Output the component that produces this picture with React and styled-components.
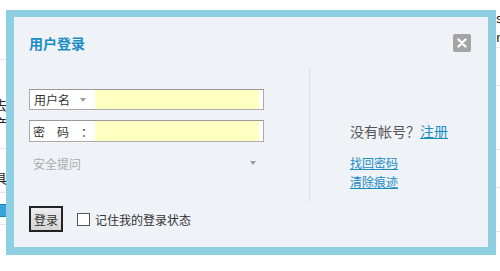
import styled, { createGlobalStyle } from "styled-components";

const GlobalStyle = createGlobalStyle`
  html, body {
    margin: 0;
    padding: 0;
    background: #fff;
  }
  body {
    font-family: "Noto Sans CJK SC", "Liberation Sans", sans-serif;
    font-size: 12px;
    color: #333;
  }
`;

const Page = styled.div`
  width: 500px;
  height: 271px;
  display: flex;
  overflow: hidden;
  background: #fff;
`;

const SideStrip = styled.div`
  width: ${(p) => p.width}px;
  flex-shrink: 0;
  overflow: hidden;
  display: flex;
  flex-direction: column;
  padding-top: ${(p) => p.top || 0}px;
`;

const StripText = styled.div`
  height: ${(p) => p.h}px;
  line-height: ${(p) => p.h}px;
  font-size: 13px;
  color: #222;
  white-space: nowrap;
  margin-left: ${(p) => p.shift || 0}px;
  border-bottom: ${(p) => (p.line ? "1px solid #e6e6e6" : "none")};
  box-sizing: border-box;
`;

const StripIcon = styled.div`
  width: 12px;
  height: 11px;
  margin: 11px 0 0 -7px;
  border-radius: 2px;
  background: #3aa3dc;
  border: 1px solid #1d7fb8;
`;

const Dialog = styled.div`
  margin-top: 10px;
  width: 490px;
  height: 245px;
  flex-shrink: 0;
  box-sizing: border-box;
  border-style: solid;
  border-color: #8ecfe1;
  border-width: 7px 8px 8px 8px;
  background: #eff2f7;
  padding: 17px 16px 0 15px;
  display: flex;
  flex-direction: column;
`;

const Header = styled.div`
  height: 18px;
  display: flex;
  align-items: center;
  justify-content: space-between;
`;

const Title = styled.h3`
  margin: 0;
  font-size: 14px;
  font-weight: bold;
  color: #1a8cc6;
`;

const CloseButton = styled.button`
  all: unset;
  width: 18px;
  height: 18px;
  border-radius: 2px;
  background: #a4a4a4;
  display: grid;
  place-items: center;
  margin-right: 1px;
`;

const Body = styled.div`
  margin-top: 16px;
  height: 134px;
  display: grid;
  grid-template-columns: 280px 1px 1fr;
`;

const LeftCol = styled.div`
  padding-top: 21px;
  display: flex;
  flex-direction: column;
`;

const FieldBox = styled.div`
  width: 235px;
  height: ${(p) => p.h}px;
  margin-top: ${(p) => p.gap || 0}px;
  box-sizing: border-box;
  border: 1px solid #aaa;
  border-top-color: #999;
  background: #fff;
  display: flex;
`;

const FieldLabel = styled.div`
  width: 65px;
  flex-shrink: 0;
  padding-left: ${(p) => p.pl || 4}px;
  box-sizing: border-box;
  display: flex;
  align-items: center;
  white-space: nowrap;
  overflow: hidden;
  color: #333;
  letter-spacing: ${(p) => p.spacing || 0}px;
`;

const Caret = styled.span`
  width: 0;
  height: 0;
  border-left: 3.5px solid transparent;
  border-right: 3.5px solid transparent;
  border-top: 4px solid #9a9a9a;
  margin-left: ${(p) => p.ml || 0}px;
`;

const YellowInput = styled.input`
  all: unset;
  flex: 1;
  margin-right: 4px;
  background: #ffffc2;
`;

const SelectRow = styled.div`
  width: 235px;
  height: 20px;
  margin-top: 11px;
  padding: 0 8px 0 4px;
  box-sizing: border-box;
  display: flex;
  align-items: center;
  justify-content: space-between;
  color: #aaa;
`;

const Divider = styled.div`
  background: #dcdfe4;
`;

const RightCol = styled.div`
  padding: 54px 0 0 40px;
  display: flex;
  flex-direction: column;
`;

const Question = styled.div`
  font-size: 14px;
  line-height: 18px;
  color: #555;
  margin-bottom: 12px;
`;

const Link = styled.a`
  color: #1a8cc6;
  text-decoration: underline;
  font-size: ${(p) => p.size || 12}px;
  line-height: 19px;
  cursor: pointer;
`;

const Footer = styled.div`
  margin-top: 4px;
  display: flex;
  align-items: center;
`;

const LoginButton = styled.button`
  all: unset;
  width: 34px;
  height: 26px;
  box-sizing: border-box;
  border: 2px solid #222;
  background: linear-gradient(#ededed, #d4d4d4);
  color: #333;
  font-size: 12px;
  display: grid;
  place-items: center;
`;

const CheckBox = styled.span`
  width: 13px;
  height: 13px;
  box-sizing: border-box;
  border: 1px solid #555;
  background: #fff;
  margin-left: 14px;
`;

const CheckLabel = styled.span`
  margin-left: 5px;
  color: #333;
`;

export default function App() {
  return (
    <>
      <GlobalStyle />
      <Page>
        <SideStrip width={6}>
          <StripText h={60} line />
          <StripText h={36} />
          <StripText h={18} shift={-6}>去</StripText>
          <StripText h={18} shift={-6}>产</StripText>
          <StripText h={17} line />
          <StripText h={20} />
          <StripText h={18} shift={-6}>具</StripText>
          <StripText h={6} line />
          <StripIcon />
          <StripText h={8} line />
        </SideStrip>
        <Dialog>
          <Header>
            <Title>用户登录</Title>
            <CloseButton aria-label="关闭">
              <svg width="10" height="10" viewBox="0 0 10 10">
                <path
                  d="M1.5 1.5 L8.5 8.5 M8.5 1.5 L1.5 8.5"
                  stroke="#fff"
                  strokeWidth="2.4"
                  strokeLinecap="round"
                />
              </svg>
            </CloseButton>
          </Header>
          <Body>
            <LeftCol>
              <FieldBox h={21}>
                <FieldLabel>
                  用户名
                  <Caret ml={10} />
                </FieldLabel>
                <YellowInput />
              </FieldBox>
              <FieldBox h={22} gap={10}>
                <FieldLabel pl={3} spacing={12}>
                  密码：
                </FieldLabel>
                <YellowInput type="password" />
              </FieldBox>
              <SelectRow>
                安全提问
                <Caret />
              </SelectRow>
            </LeftCol>
            <Divider />
            <RightCol>
              <Question>
                没有帐号？<Link size={14}>注册</Link>
              </Question>
              <Link>找回密码</Link>
              <Link>清除痕迹</Link>
            </RightCol>
          </Body>
          <Footer>
            <LoginButton>登录</LoginButton>
            <CheckBox />
            <CheckLabel>记住我的登录状态</CheckLabel>
          </Footer>
        </Dialog>
        <SideStrip width={4} top={10}>
          <StripText h={16}>st</StripText>
          <StripText h={22} line>r</StripText>
          <StripText h={38} line />
          <StripText h={64} line />
          <StripText h={38} line />
          <StripText h={44} line />
        </SideStrip>
      </Page>
    </>
  );
}
